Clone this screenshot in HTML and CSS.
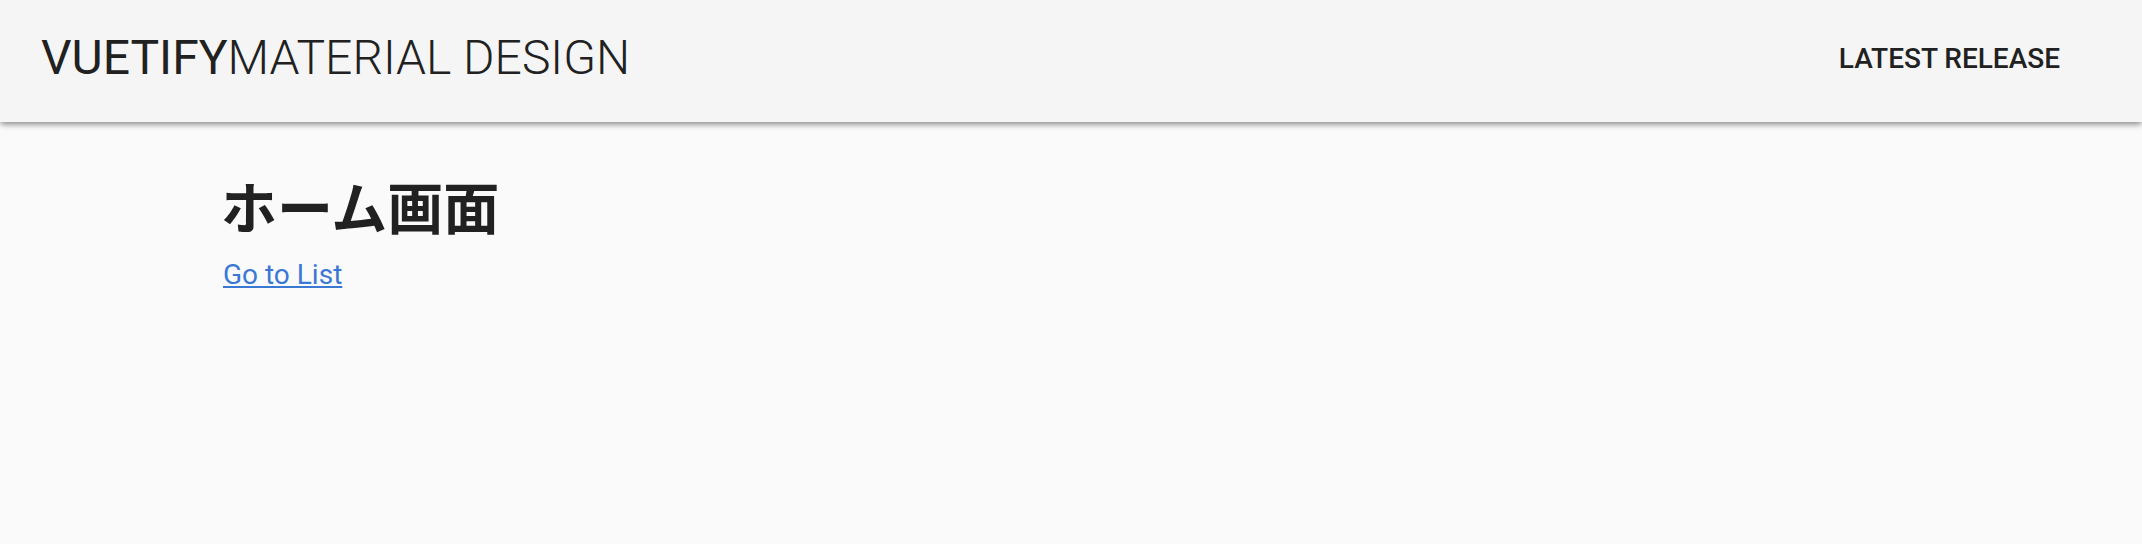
FILE: index.html
```html
<!DOCTYPE html>
<html lang="ja">
<head>
<meta charset="utf-8">
<title>Vuetify</title>
<link rel="stylesheet" href="styles.css">
</head>
<body>
<div class="app">
  <header class="toolbar">
    <div class="title"><span class="brand">VUETIFY</span><span class="sub">MATERIAL DESIGN</span></div>
    <a class="btn" href="#">LATEST RELEASE</a>
  </header>
  <main class="content">
    <h1 class="heading">ホーム画面</h1>
    <a class="link" href="#">Go to List</a>
  </main>
</div>
</body>
</html>
```
FILE: styles.css
```css
html, body {
  margin: 0;
  padding: 0;
  height: 100%;
}
body {
  background: #fafafa;
  font-family: Roboto, "Noto Sans CJK JP", sans-serif;
  color: #212121;
}
.app {
  min-height: 100%;
}
.toolbar {
  height: 122px;
  background: #f5f5f5;
  display: flex;
  align-items: center;
  justify-content: space-between;
  padding: 0 82px 6px 41px;
  box-shadow: 0 4px 6px -1px rgba(0,0,0,0.3), 0 2px 4px rgba(0,0,0,0.15);
  position: relative;
  z-index: 1;
  box-sizing: border-box;
}
.title {
  font-size: 48px;
  line-height: 1;
  white-space: nowrap;
}
.brand {
  font-weight: 400;
}
.sub {
  font-weight: 300;
}
.btn {
  font-size: 28px;
  font-weight: 500;
  color: #212121;
  text-decoration: none;
}
.content {
  padding: 49px 0 0 223px;
}
.heading {
  font-family: "Noto Sans CJK JP", sans-serif;
  font-weight: 700;
  font-size: 56px;
  line-height: 1.2;
  margin: 0 0 20px -2px;
}
.link {
  font-size: 28px;
  color: #3a78d3;
}
```
